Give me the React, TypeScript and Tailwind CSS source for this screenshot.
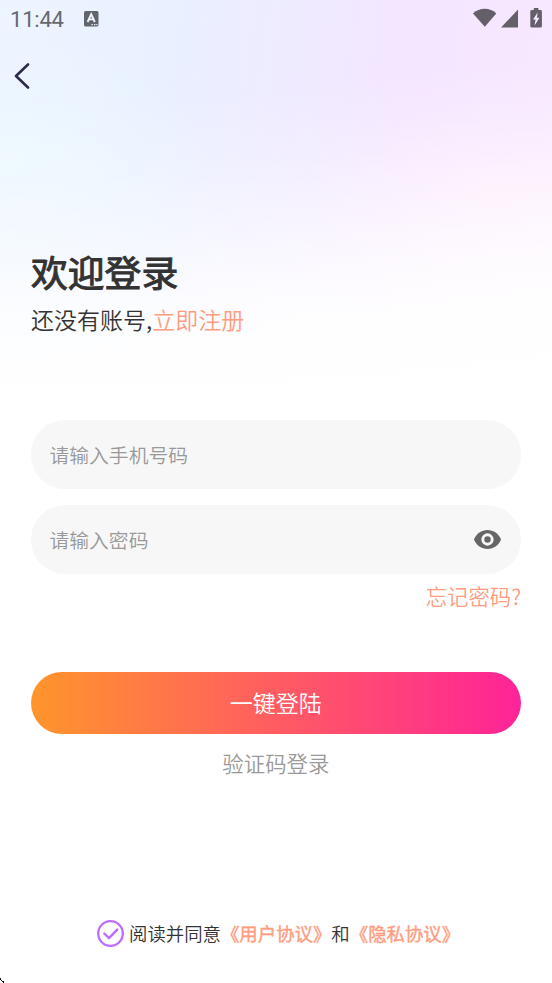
import React from "react";

function StatusBar() {
  return (
    <header className="flex h-[38px] items-center justify-between pl-[10px] pr-[9px] text-[#62636b]">
      <div className="flex items-center">
        <span className="w-[74px] pt-px font-[Roboto,sans-serif] text-[22px] font-normal leading-[38px] tracking-[-0.2px] text-[#65686e]">11:44</span>
        <svg width="15" height="16" viewBox="0 0 15 16">
          <rect width="14.5" height="15.5" rx="1.6" fill="#62666c" />
          <path d="M3.6 11 7.2 3.2 10.8 11M5 8.4h4.4" fill="none" stroke="#f2f6ff" strokeWidth="1.9" />
          <path d="M7.5 13.6h1.4M10 13.6h1.4M12.3 13.6h1.2" stroke="#f2f6ff" strokeWidth="1.2" />
        </svg>
      </div>
      <svg width="70" height="22" viewBox="0 0 70 22" fill="#655f6a">
        <path d="M0 5.4C6.500-.8 17-.8 23.300 5.400L11.800 18.700Z" />
        <path d="M45 1.600v18H28Z" />
        <path d="M60.800 0h4.600v2h2.100q1.400 0 1.400 1.400v14.800q0 1.400-1.400 1.400h-8.800q-1.400 0-1.400-1.400V3.400q0-1.400 1.400-1.400h2.100Z" />
        <path d="M64.600 4.500 60 11.600h2.500l-.9 6 4.900-7.800h-2.600Z" fill="#f6e9ff" />
      </svg>
    </header>
  );
}

export default function App() {
  return (
    <main className="relative flex h-[983px] w-[552px] flex-col overflow-hidden bg-white bg-[linear-gradient(174deg,rgba(255,255,255,0)_24%,rgba(255,255,255,0.18)_38%,rgba(255,255,255,0.5)_53%,rgba(255,255,255,0.82)_66%,rgba(255,255,255,0.95)_77%,#fff_92%),radial-gradient(ellipse_190px_110px_at_500px_205px,rgba(255,235,253,0.7)_0%,rgba(255,235,253,0)_100%),radial-gradient(ellipse_210px_130px_at_0px_160px,#edf8ff_0%,rgba(237,248,255,0)_100%),linear-gradient(98deg,#edf5ff_0%,#e9f0ff_28%,#f4e6ff_68%,#f8e8ff_100%)] bg-[length:552px_420px] bg-no-repeat font-['Noto_Sans_CJK_SC',sans-serif] font-[350] text-[#333]">
      <StatusBar />
      <nav className="flex h-[76px] items-center pl-[14px]">
        <button aria-label="返回">
          <svg width="17" height="27" viewBox="0 0 17 27" fill="none" stroke="#2d2b4c" strokeWidth="2.6" strokeLinecap="round" strokeLinejoin="round">
            <path d="M14 1.500 2 13 14 24.500" />
          </svg>
        </button>
      </nav>

      <section className="mt-[130px] px-[31px]">
        <h1 className="h-[54px] text-[36.800px] font-normal leading-[54px] [-webkit-text-stroke:1px_#333]">欢迎登录</h1>
        <p className="mt-1 h-[34px] text-[23px] leading-[34px]">
          还没有账号,<a className="text-[#ff9c7f]">立即注册</a>
        </p>
      </section>

      <form className="mt-[84px] flex flex-col pl-[30.500px] pr-[30.800px]">
        <div className="flex h-[69px] items-center rounded-[34px] bg-[#f7f7f7] px-[19px] text-[19.800px] text-[#999]">
          请输入手机号码
        </div>
        <div className="mt-4 flex h-[69px] items-center justify-between rounded-[34px] bg-[#f7f7f7] pl-[19px] pr-5 text-[19.800px] text-[#999]">
          <span>请输入密码</span>
          <svg width="27" height="19" viewBox="0 0 27 19">
            <path d="M0 9.500C2.500 3.500 7.500 0 13.500 0S24.500 3.500 27 9.500C24.500 15.500 19.500 19 13.500 19S2.500 15.500 0 9.500Z" fill="#666" />
            <circle cx="13.500" cy="9.500" r="4.700" fill="#666" stroke="#f7f7f7" strokeWidth="2.900" />
          </svg>
        </div>
        <a className="mt-[6px] h-8 self-end text-[21.400px] leading-8 text-[#ff9c7f]">忘记密码?</a>
        <button type="button" className="mt-[60px] h-[62px] rounded-[31px] bg-[linear-gradient(90deg,#ff952c_0%,#ff5c62_50%,#ff2398_100%)] pb-[2px] text-[23px] leading-[60px] text-white">
          一键登陆
        </button>
        <a className="mt-[13px] h-8 self-center text-[21.400px] leading-8 text-[#999]">验证码登录</a>
      </form>

      <footer className="mt-[140px] flex h-[28px] items-center pl-[97px] text-[18.400px] leading-7">
        <svg className="mr-[5px]" width="27" height="27" viewBox="0 0 27 27" fill="none" stroke="#bd6cff">
          <circle cx="13.500" cy="13.500" r="12.300" strokeWidth="2.300" />
          <path d="m7.300 13.500 4.700 4.700 8.200-8.600" strokeWidth="2.400" strokeLinecap="round" strokeLinejoin="round" />
        </svg>
        <span>阅读并同意</span>
        <a className="text-[#ff9c7f] [-webkit-text-stroke:0.500px_#ff9c7f]">《用户协议》</a>
        <span>和</span>
        <a className="text-[#ff9c7f] [-webkit-text-stroke:0.500px_#ff9c7f]">《隐私协议》</a>
      </footer>
      <svg className="absolute bottom-0 left-0" width="5" height="5" viewBox="0 0 5 5" fill="#111">
        <path d="M0 0h1v2H0zM1 2h1v1H1zM2 3h1v1H2zM3 3h1v2H3z" />
      </svg>
    </main>
  );
}
